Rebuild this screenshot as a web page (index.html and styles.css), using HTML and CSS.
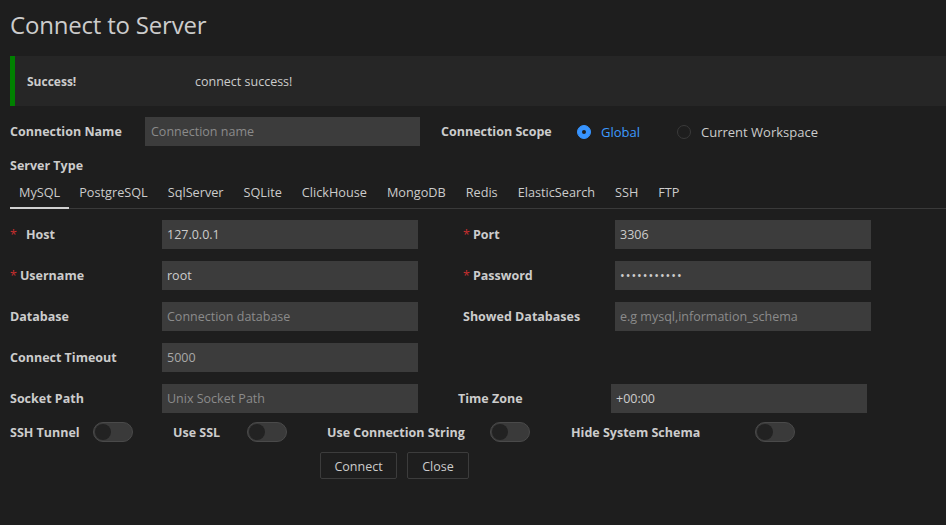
FILE: index.html
```html
<!DOCTYPE html>
<html>
<head>
<meta charset="utf-8">
<link rel="stylesheet" href="styles.css">
</head>
<body>
<div class="page">
  <h1 class="title">Connect to Server</h1>
  <div class="alert">
    <span class="alert-title">Success!</span>
    <span class="alert-msg">connect success!</span>
  </div>

  <div class="row-name">
    <label class="lbl lbl-name">Connection Name</label>
    <input class="inp inp-name" placeholder="Connection name">
    <label class="lbl lbl-scope">Connection Scope</label>
    <div class="radio radio-on"><span class="dot"></span><span class="radio-text">Global</span></div>
    <div class="radio"><span class="dot"></span><span class="radio-text">Current Workspace</span></div>
  </div>

  <div class="lbl section">Server Type</div>
  <div class="tabs">
    <div class="tab active">MySQL</div>
    <div class="tab">PostgreSQL</div>
    <div class="tab">SqlServer</div>
    <div class="tab">SQLite</div>
    <div class="tab">ClickHouse</div>
    <div class="tab">MongoDB</div>
    <div class="tab">Redis</div>
    <div class="tab">ElasticSearch</div>
    <div class="tab">SSH</div>
    <div class="tab">FTP</div>
  </div>

  <div class="grid">
    <label class="lbl"><span class="req">*</span><span class="req-gap-wide">Host</span></label>
    <input class="inp" value="127.0.0.1">
    <label class="lbl"><span class="req">*</span><span class="req-gap">Port</span></label>
    <input class="inp" value="3306">

    <label class="lbl"><span class="req">*</span><span class="req-gap">Username</span></label>
    <input class="inp" value="root">
    <label class="lbl"><span class="req">*</span><span class="req-gap">Password</span></label>
    <input class="inp pw" type="password" value="12345678901">

    <label class="lbl">Database</label>
    <input class="inp" placeholder="Connection database">
    <label class="lbl">Showed Databases</label>
    <input class="inp" placeholder="e.g mysql,information_schema">

    <label class="lbl">Connect Timeout</label>
    <input class="inp dim" value="5000">
    <span class="empty"></span>
    <span class="empty"></span>

    <label class="lbl">Socket Path</label>
    <input class="inp" placeholder="Unix Socket Path">
    <label class="lbl shift">Time Zone</label>
    <input class="inp shift" value="+00:00">
  </div>

  <div class="toggles">
    <label class="lbl tg-lbl w-ssh">SSH Tunnel</label><span class="switch"><span class="knob"></span></span>
    <label class="lbl tg-lbl w-ssl">Use SSL</label><span class="switch"><span class="knob"></span></span>
    <label class="lbl tg-lbl w-str">Use Connection String</label><span class="switch"><span class="knob"></span></span>
    <label class="lbl tg-lbl w-hide">Hide System Schema</label><span class="switch"><span class="knob"></span></span>
  </div>

  <div class="actions">
    <button class="btn btn-connect">Connect</button>
    <button class="btn btn-close">Close</button>
  </div>
</div>
</body>
</html>
```

FILE: styles.css
```css
* { box-sizing: border-box; }
html, body {
  margin: 0;
  padding: 0;
  background: #1e1e1e;
  width: 946px;
  height: 525px;
  overflow: hidden;
}
body {
  font-family: "Open Sans", "Noto Sans", sans-serif;
  color: #cccccc;
  font-size: 13px;
}
.page {
  padding: 0 0 0 10px;
  width: 960px;
}
.title {
  margin: 0;
  height: 56px;
  padding-top: 8px;
  font-size: 24px;
  font-weight: 400;
  line-height: 34px;
  color: #cccccc;
  letter-spacing: -0.2px;
}
.alert {
  height: 50px;
  background: #262626;
  border-left: 5px solid #008000;
  display: flex;
  align-items: center;
  padding-left: 12px;
  font-size: 12px;
}
.alert-title {
  font-weight: 700;
  width: 168px;
}
.alert-msg { color: #cccccc; font-size: 12.5px; }

.lbl {
  font-weight: 700;
  font-size: 12.5px;
  color: #cccccc;
}
.row-name {
  display: flex;
  align-items: center;
  margin-top: 11px;
  height: 29px;
}
.lbl-name { width: 135px; }
.inp {
  height: 29px;
  background: #3c3c3c;
  border: none;
  outline: none;
  color: #cccccc;
  font-family: "Open Sans", "Noto Sans", sans-serif;
  font-size: 12.5px;
  padding: 0 5px;
  width: 256px;
}
.inp::placeholder { color: #8b8b8b; }
.inp.dim { color: #a8a8a8; }
.inp.pw { letter-spacing: 1px; }
.inp-name { width: 275px; padding-left: 6px; }
.lbl-scope { margin-left: 21px; width: 136px; }
.radio {
  display: flex;
  align-items: center;
  margin-right: 37px;
}
.dot {
  width: 14px;
  height: 14px;
  border-radius: 50%;
  border: 1px solid #3a3a3a;
  background: #1e1e1e;
  margin-right: 10px;
  position: relative;
}
.radio-on .dot {
  background: #3794ff;
  border-color: #3794ff;
}
.radio-on .dot::after {
  content: "";
  position: absolute;
  left: 4px;
  top: 4px;
  width: 4px;
  height: 4px;
  border-radius: 50%;
  background: #1e1e1e;
}
.radio-text { font-size: 13px; color: #cccccc; }
.radio-on .radio-text { color: #3d9bff; }

.section {
  margin-top: 10px;
  height: 20px;
  line-height: 20px;
}
.tabs {
  display: flex;
  margin-top: 3px;
  height: 30px;
  border-bottom: 1px solid #3a3a3a;
}
.tab {
  padding: 0 10px;
  line-height: 26px;
  height: 30px;
  font-size: 12.7px;
  color: #cccccc;
}
.tab.active {
  padding: 0 9px;
  border-bottom: 2px solid #d0d0d0;
  margin-bottom: -1px;
}

.grid {
  display: grid;
  grid-template-columns: 152px 301px 152px 256px;
  row-gap: 12px;
  margin-top: 11px;
  align-items: center;
}
.grid .inp { justify-self: start; }
.req { color: #c72e2e; font-weight: 400; }
.req-gap { margin-left: 3px; }
.req-gap-wide { margin-left: 9px; }
.shift { position: relative; left: -4px; }
.lbl.shift { left: -5px; }

.toggles {
  display: flex;
  align-items: center;
  margin-top: 9px;
  height: 20px;
}
.tg-lbl { display: inline-block; }
.w-ssh { width: 83px; }
.w-ssl { width: 74px; margin-left: 40px; }
.w-str { width: 163px; margin-left: 40px; }
.w-hide { width: 184px; margin-left: 41px; }
.switch {
  width: 40px;
  height: 20px;
  border-radius: 10px;
  background: #3a3a3a;
  border: 1px solid #4a4a4a;
  display: inline-flex;
  align-items: center;
  padding-left: 1px;
}
.knob {
  width: 16px;
  height: 16px;
  border-radius: 50%;
  background: #222222;
}

.actions {
  display: flex;
  margin-top: 10px;
  padding-left: 310px;
  gap: 10px;
}
.btn {
  height: 27px;
  background: #1e1e1e;
  border: 1px solid #3c3c3c;
  border-radius: 2px;
  color: #cccccc;
  font-family: "Open Sans", "Noto Sans", sans-serif;
  font-size: 12.5px;
  padding: 1px 0 0;
}
.btn-connect { width: 77px; }
.btn-close { width: 62px; }
```
